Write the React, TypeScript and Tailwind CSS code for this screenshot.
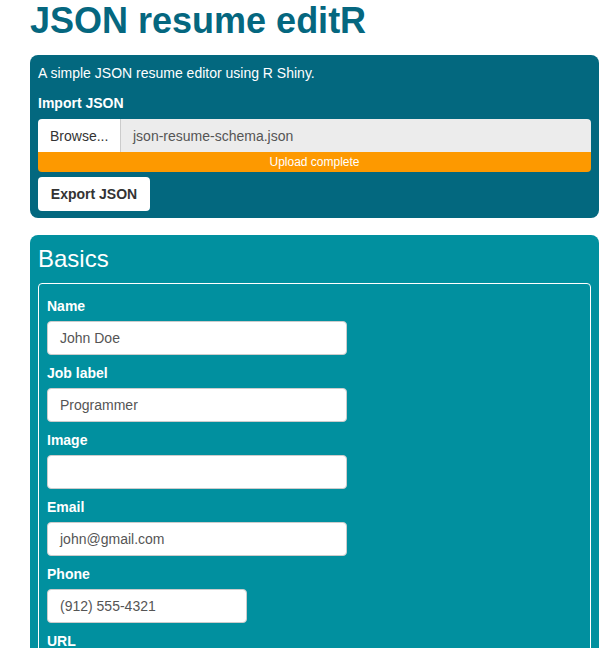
import React from 'react'

const fields = [
  { label: 'Name', value: 'John Doe', width: 'w-[300px]' },
  { label: 'Job label', value: 'Programmer', width: 'w-[300px]' },
  { label: 'Image', value: '', width: 'w-[300px]' },
  { label: 'Email', value: 'john@gmail.com', width: 'w-[300px]' },
  { label: 'Phone', value: '(912) 555-4321', width: 'w-[200px]' },
  { label: 'URL', value: '', width: 'w-[300px]' },
]

export default function App() {
  return (
    <div className="h-[648px] overflow-hidden bg-white pl-[30px] pr-[10px] font-['Liberation_Sans',Arial,sans-serif] text-[14px] leading-[20px] text-[#333]">
      <h1 className="pt-[1px] text-[36px] font-bold leading-[40px] text-[#05677f]">JSON resume editR</h1>

      <section className="mt-[14px] rounded-[8px] bg-[#03687f] px-[8px] pt-[8px] pb-[7px] text-white">
        <p>A simple JSON resume editor using R Shiny.</p>
        <label className="mt-[10px] block font-bold">Import JSON</label>
        <div className="mt-[6px]">
          <div className="flex h-[33px]">
            <div className="flex w-[83px] items-center rounded-tl-[4px] border-r border-[#ccc] bg-white px-[12px] text-[#333]">Browse...</div>
            <div className="flex flex-1 items-center rounded-tr-[4px] bg-[#ececec] px-[12px] text-[#555]">json-resume-schema.json</div>
          </div>
          <div className="flex h-[20px] items-center justify-center rounded-b-[4px] bg-[#fd9900] text-[12px] leading-[20px] text-white">
            Upload complete
          </div>
        </div>
        <button className="mt-[5px] h-[34px] w-[112px] rounded-[4px] bg-white font-bold text-[#333]">Export JSON</button>
      </section>

      <section className="mt-[17px] rounded-t-[8px] bg-[#01909f] px-[8px] pt-[11px] pb-[40px] text-white">
        <h3 className="text-[24px] leading-[26px]">Basics</h3>
        <div className="mt-[11px] rounded-[4px] border border-white px-[8px] pt-[12px] pb-[10px]">
          {fields.map((f) => (
            <div key={f.label} className="mb-[8px]">
              <label className="mb-[5px] block font-bold">{f.label}</label>
              <div className={`${f.width} flex h-[34px] items-center rounded-[4px] border border-[#ccc] bg-white px-[12px] text-[#555]`}>
                {f.value}
              </div>
            </div>
          ))}
        </div>
      </section>
    </div>
  )
}
